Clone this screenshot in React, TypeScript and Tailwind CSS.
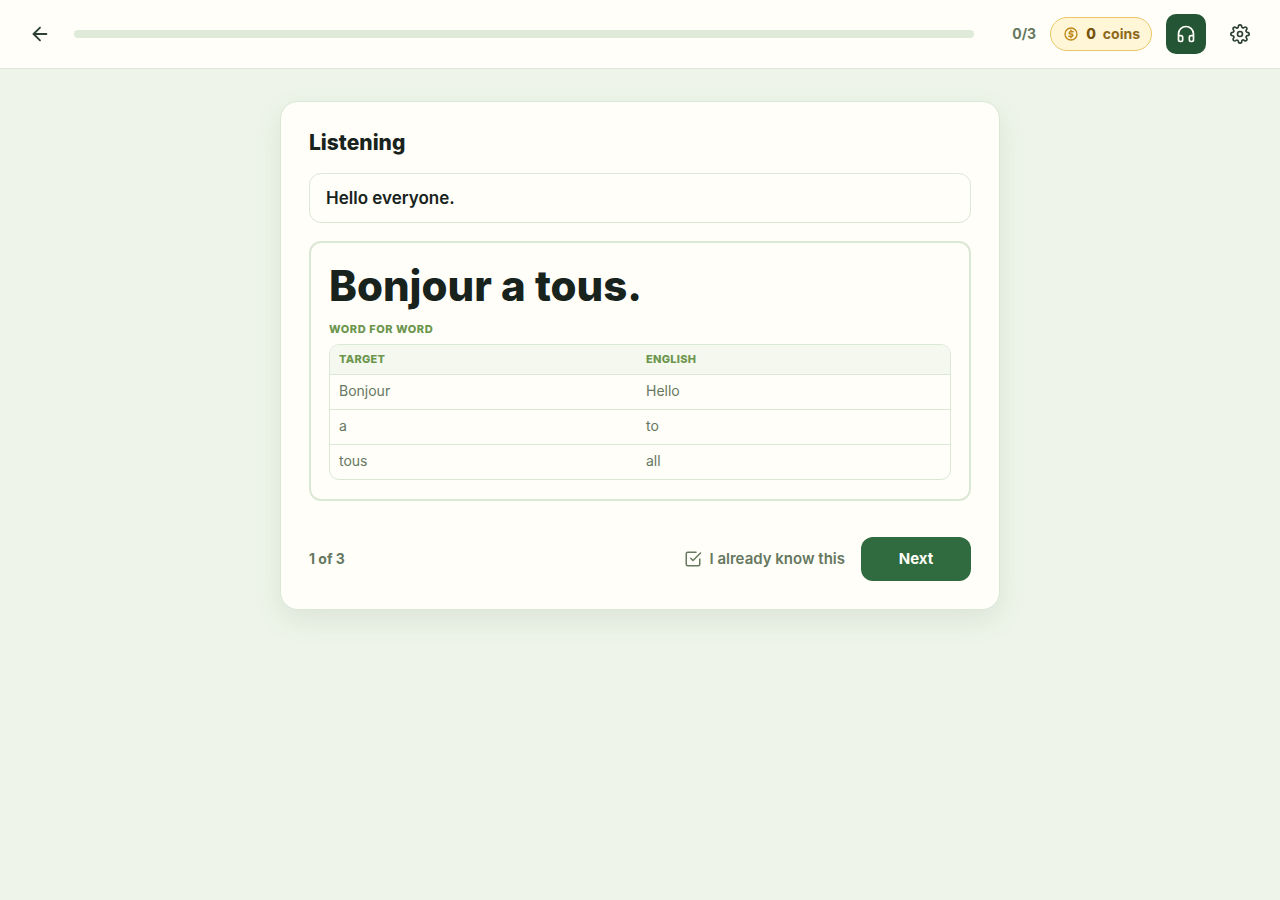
import { ArrowLeft, Headphones } from "lucide-react";
import { FiCheckSquare, FiSettings } from "react-icons/fi";

type WordPair = { target: string; english: string };

const words: WordPair[] = [
  { target: "Bonjour", english: "Hello" },
  { target: "a", english: "to" },
  { target: "tous", english: "all" },
];

function CoinIcon({ className }: { className?: string }) {
  return (
    <svg
      viewBox="0 0 24 24"
      fill="none"
      stroke="currentColor"
      strokeWidth={2}
      strokeLinecap="round"
      strokeLinejoin="round"
      className={className}
      aria-hidden
    >
      <circle cx="12" cy="12" r="9" />
      <path
        d="M15.2 8.6h-4.1a1.7 1.7 0 0 0 0 3.4h1.8a1.7 1.7 0 0 1 0 3.4H8.8M12 6.6v2M12 15.4v2"
        strokeWidth={2.4}
      />
    </svg>
  );
}

function LessonHeader({ done, total, coins }: { done: number; total: number; coins: number }) {
  return (
    <header className="flex items-center gap-3.5 border-b border-[#dce8d6] bg-[#fffef9] px-5 py-3.5">
      <button
        type="button"
        aria-label="Back"
        className="flex size-10 shrink-0 items-center justify-center rounded-xl text-[#2d4034]"
      >
        <ArrowLeft className="size-[22px]" aria-hidden />
      </button>
      <div
        role="progressbar"
        aria-label="Lesson progress"
        aria-valuenow={done}
        aria-valuemin={0}
        aria-valuemax={total}
        className="h-2 min-w-0 flex-1 overflow-hidden rounded-full bg-[#dfead9]"
      >
        <div className="h-full bg-[#2f6b3f]" style={{ width: `${(done / total) * 100}%` }} />
      </div>
      <span className="w-12 shrink-0 text-right text-sm font-bold text-[#66785f]">
        {done}/{total}
      </span>
      <div className="flex h-[34px] shrink-0 items-center gap-[7px] rounded-full border border-[#e8c766] bg-[#fff6d8] pr-[11px] pl-3 text-sm font-bold text-[#8f6a1c]">
        <CoinIcon className="size-4 text-[#bf8718]" />
        <span className="font-extrabold text-[#75530b]">{coins}</span>
        <span>coins</span>
      </div>
      <button
        type="button"
        aria-label="Listening mode"
        className="flex size-10 shrink-0 items-center justify-center rounded-[10px] bg-[#245534] text-[#fffef9]"
      >
        <Headphones className="size-5" aria-hidden />
      </button>
      <button
        type="button"
        aria-label="Settings"
        className="flex size-10 shrink-0 items-center justify-center rounded-xl text-[#2d4034]"
      >
        <FiSettings className="size-5" aria-hidden />
      </button>
    </header>
  );
}

function WordTable({ rows }: { rows: WordPair[] }) {
  return (
    <div className="overflow-hidden rounded-[10px] border border-[#dce8d6]">
      <table className="w-full table-fixed text-left text-sm leading-5 text-[#66785f]">
        <thead className="bg-[#f4f8ef] text-[11px] leading-[21px] text-[#6c964e] uppercase">
          <tr>
            <th className="py-1 pl-[9px] font-extrabold tracking-wide">Target</th>
            <th className="py-1 pl-1.5 font-extrabold tracking-wide">English</th>
          </tr>
        </thead>
        <tbody>
          {rows.map((row) => (
            <tr key={row.target} className="border-t border-[#dce8d6]">
              <td className="pt-1.5 pb-2 pl-[9px]">{row.target}</td>
              <td className="pt-1.5 pb-2 pl-1.5">{row.english}</td>
            </tr>
          ))}
        </tbody>
      </table>
    </div>
  );
}

export default function App() {
  return (
    <div className="min-h-screen bg-[#eef4e9] font-['Inter',sans-serif] text-[#17231c]">
      <LessonHeader done={0} total={3} coins={0} />
      <main className="px-5 py-8">
        <section className="mx-auto max-w-[720px] rounded-[18px] border border-[#dce8d6] bg-[#fffef9] p-7 shadow-[0_10px_28px_rgba(47,107,63,0.1)]">
          <h1 className="text-[21px] leading-[25px] font-extrabold">Listening</h1>
          <p className="mt-[18px] rounded-xl border border-[#dce8d6] px-4 py-3 text-[17px] leading-6 font-semibold">
            Hello everyone.
          </p>

          <div className="mt-[18px] rounded-xl border-2 border-[#dce8d6] px-[18px] pt-[18px] pb-[19px]">
            <p className="text-[42px] leading-[50px] font-extrabold">Bonjour a tous.</p>
            <h2 className="mt-2.5 mb-1.5 text-[11px] leading-[17px] font-extrabold tracking-wider text-[#6c964e] uppercase">
              Word for word
            </h2>
            <WordTable rows={words} />
          </div>

          <footer className="mt-9 flex items-center gap-4">
            <span className="mr-auto text-sm font-bold text-[#66785f]">1 of 3</span>
            <button
              type="button"
              className="flex items-center gap-2 text-[15px] font-semibold text-[#66785f]"
            >
              <FiCheckSquare className="size-[18px]" aria-hidden />
              I already know this
            </button>
            <button
              type="button"
              className="h-11 w-[110px] rounded-xl bg-[#2f6b3f] text-[15px] font-bold text-[#fffef9]"
            >
              Next
            </button>
          </footer>
        </section>
      </main>
    </div>
  );
}
